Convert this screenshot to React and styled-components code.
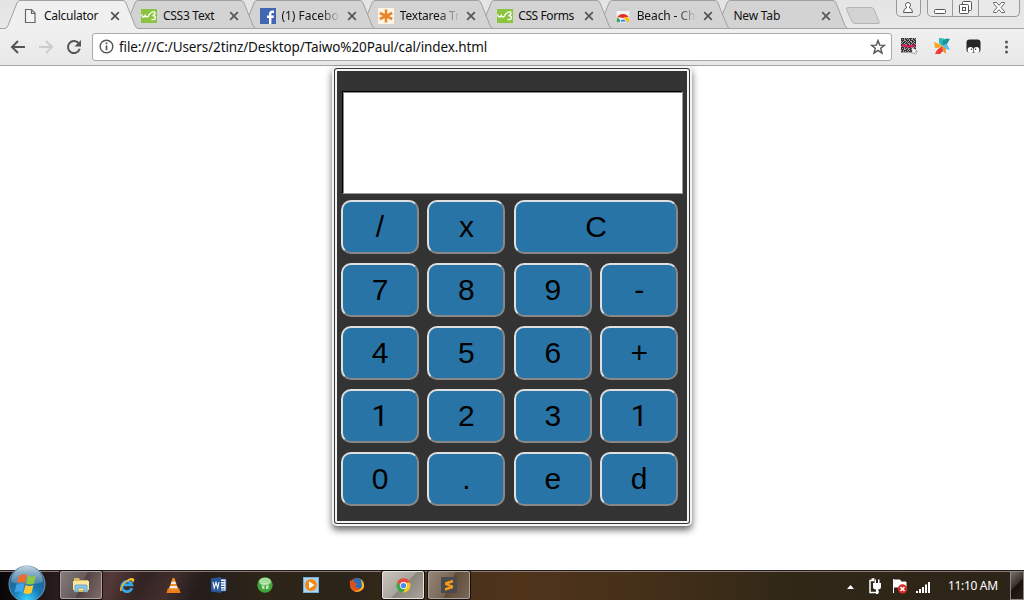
import React from 'react';
import styled, { createGlobalStyle } from 'styled-components';

const GlobalStyle = createGlobalStyle`
  * { box-sizing: border-box; }
  body { margin: 0; background: #fff; overflow: hidden; font-family: "Noto Sans", "Open Sans", sans-serif; }
  svg { display: block; flex: none; }
`;

const Screen = styled.div`
  width: 1024px; height: 600px; display: flex; flex-direction: column; background: #fff; overflow: hidden;
`;
const TabStrip = styled.header`
  height: 29px; flex: none; display: flex; align-items: flex-start; padding-left: 5px;
  background: linear-gradient(#e4e4e4, #e9e9e9); box-shadow: inset 0 -1px #a3a3a3;
`;
const TabBox = styled.div`
  position: relative; width: 133px; height: 29px; margin-right: -14.6px; flex: none;
  display: flex; align-items: center; padding: 2px 0 0 ${p => (p.$active ? 17 : 18)}px; z-index: ${p => p.$z};
`;
const TabShape = styled.svg`position: absolute; left: 0; top: 0;`;
const Favicon = styled.span`position: relative; width: 16px; height: 16px; margin-right: ${p => (p.$active ? 6 : 5.6)}px; flex: none;`;
const Title = styled.span`
  position: relative; flex: none; width: ${p => (p.$plain ? 82.600 : 61)}px; white-space: nowrap;
  font-size: 12px; line-height: 18px; color: #111; letter-spacing: ${p => p.$ls || 0}px;
  ${p => p.$fade && 'mask-image: linear-gradient(90deg, #000 64%, transparent 98%);'}
`;
const Close = styled.svg`position: relative; margin-left: 5px;`;
const NewTab = styled.svg`margin: 7px 0 0 11px;`;
const WindowControls = styled.div`display: flex; margin-left: 15px;`;
const ControlGroup = styled.div`
  display: flex; height: 17px; border: 1px solid #999; border-top: 0; border-radius: 0 0 5px 5px;
  margin-right: 6px; background: #e9e9e9; overflow: hidden;
`;
const Control = styled.div`
  width: ${p => p.$w}px; display: flex; align-items: center; justify-content: center; padding-bottom: 1px;
  & + & { border-left: 1px solid #999; }
`;

const Toolbar = styled.div`
  height: 37px; flex: none; display: flex; align-items: center; padding: 0 0 1px 10px;
  background: linear-gradient(#f0f0f0, #e8e8e8); border-bottom: 1px solid #a3a3a3;
`;
const NavIcon = styled.svg`margin-right: 12px;`;
const Address = styled.div`
  width: 800px; height: 28px; border: 1px solid #a9a9a9; border-radius: 3px; background: #fff;
  display: flex; align-items: center; padding: 0 5px 0 6px; margin-left: -2px;
`;
const Url = styled.span`
  flex: 1; margin-left: 5px; font-size: 13.5px; line-height: 20px; letter-spacing: -0.12px; color: #111; white-space: nowrap;
`;
const Extensions = styled.div`display: flex; align-items: center; margin-left: 9px; gap: 15.500px;`;

const Page = styled.main`height: 504px; flex: none; display: flex; justify-content: center; align-items: flex-start;`;
const Calculator = styled.section`
  width: 360px; height: 460px; border: 5px double #f4f4f4; border-radius: 5px; background: #333;
  box-shadow: 0 4px 7px rgba(0, 0, 0, 0.6); padding: 20px 4px 0;
`;
const Display = styled.div`
  width: 341px; height: 103px; margin-left: 1px; background: #fff;
  border: 1px solid #000; border-right-color: #9a9a9a; border-bottom-color: #9a9a9a;
  box-shadow: inset 1px 1px #8a8a8a;
`;
const Keys = styled.div`
  display: grid; grid-template-columns: repeat(4, 78px); grid-auto-rows: 54px; gap: 9px 8.4px; margin-top: 6px;
`;
const Key = styled.button`
  grid-column: span ${p => p.$span}; padding: 0; border: 2px solid; border-color: #e0e0e0 #888 #888 #e0e0e0;
  border-radius: 10px; background: #2874a6; color: #000;
  font: 30px/34px ${p => (p.$bareOne ? 'Roboto, ' : '')}"Liberation Sans", Arial, sans-serif;
`;

const Taskbar = styled.footer`
  height: 30px; flex: none; display: flex; align-items: stretch; position: relative;
  border-top: 1px solid #241d19; box-shadow: inset 0 1px #867b74;
  background:
    linear-gradient(115deg, transparent 8%, rgba(110, 72, 68, .5) 11%, transparent 14%, rgba(100, 70, 65, .4) 17%, transparent 20%),
    linear-gradient(90deg, #080607 0, #2b1d1d 60px, #3b2929 110px, #241b1c 190px, #2d2518 260px, #2b2418 350px, #49301a 440px, #4f341a 520px, #453019 640px, #302717 800px, #2c2418 1024px);
`;
const StartButton = styled.svg`position: absolute; left: 8px; top: -6px; z-index: 2;`;
const TaskList = styled.nav`display: flex; margin-left: 60px; gap: 4px;`;
const Task = styled.div`
  width: 42px; height: 28px; display: flex; align-items: center; justify-content: center; border-radius: 2px;
  ${p => p.$state === 'open' && `
    border: 1px solid #aaa39e; box-shadow: 0 0 0 1px #15100e;
    background: linear-gradient(115deg, rgba(255,255,255,.42), rgba(255,255,255,.25) 50%, rgba(255,255,255,.13) 52%, rgba(255,255,255,.26));`}
  ${p => p.$state === 'active' && `
    border: 1px solid #e5e2dd; box-shadow: 0 0 0 1px #15100e;
    background: linear-gradient(135deg, #c9c5bf, #aaa59d 50%, #8b857c 53%, #aaa49b);`}
`;
const Tray = styled.div`margin-left: auto; display: flex; align-items: center; color: #fff;`;
const Clock = styled.span`font-size: 12px; line-height: 16px; letter-spacing: -0.32px; margin: 0 0 0 15px; width: 51px; white-space: nowrap;`;
const ShowDesktop = styled.div`
  width: 14px; height: 29px; margin-left: 11px; border: 1px solid #8b857f;
  background: linear-gradient(135deg, #777069, #3b332b 45%, #17120c 50%, #282119);
`;

const W3 = () => (
  <svg width="16" height="16" viewBox="0 0 16 16">
    <rect width="16" height="14" y="1" fill="#8bc53f" />
    <path d="M.8 6.500q.2 2.500 1.800 2.500t1.700-2.500q.2 2.500 1.800 2.500t2-2.500L10 5M10 4.500q4-1.500 4 .7 0 1.800-2.500 2.300 3.200.1 2.800 2.500-.6 2.300-3.800 1.300" fill="none" stroke="#fff" strokeWidth="1.300" />
  </svg>
);
const favicons = {
  file: () => (
    <svg width="16" height="16"><path d="M3.500 1.500h6l3.500 3.500v9.500h-9.500zM9.500 1.500v4h3.500" fill="#f5f5f5" stroke="#666" strokeWidth="1.2" /></svg>
  ),
  w3: W3,
  facebook: () => (
    <svg width="16" height="16"><rect width="16" height="16" fill="#4267b2" /><path d="M9 16v-6H7V7.500h2V6q0-3.500 3.200-3.500H14V5h-1.500Q11.400 5 11.400 6v1.500H14L13.600 10h-2.200v6z" fill="#fff" /></svg>
  ),
  star: () => (
    <svg width="16" height="16"><rect width="16" height="16" fill="#fdf3e6" /><path d="M8 1.500v13M1.800 5l12.400 6M14.200 5L1.800 11" stroke="#e8862a" strokeWidth="2.500" /></svg>
  ),
  store: () => (
    <svg width="16" height="16">
      <path d="M5 4V1.500h6V4" fill="none" stroke="#ccc" strokeWidth="1.300" />
      <path d="M1.500 3h13l-.5 11H2z" fill="#f3f3f3" />
      <path d="M2.500 9a6 5 0 0 1 11 0L8 10z" fill="#e12f2b" />
      <path d="M1.800 14q-.4-3 .9-5l3.800 5z" fill="#35a853" />
      <path d="M14.200 14q.4-3-.9-5H9l-.5 5z" fill="#fbc116" />
      <path d="M5 14a3 3 0 0 1 6 0z" fill="#4285f4" stroke="#fff" strokeWidth=".7" />
    </svg>
  ),
};

const tabs = [
  { title: 'Calculator', icon: 'file', active: true, ls: -0.28 },
  { title: 'CSS3 Text', icon: 'w3', ls: -0.28 },
  { title: '(1) Facebo', icon: 'facebook', fade: true, ls: 0 },
  { title: 'Textarea Tr', icon: 'star', fade: true, ls: -0.2 },
  { title: 'CSS Forms', icon: 'w3', ls: -0.4 },
  { title: 'Beach - Ch', icon: 'store', fade: true, ls: -0.1 },
  { title: 'New Tab', ls: -0.2 },
];

const Tab = ({ title, icon, active, fade, ls, z }) => {
  const Icon = icon && favicons[icon];
  return (
    <TabBox $z={z} $active={active}>
      <TabShape width="133" height="29">
        <path d="M0 28.500Q2 28 3 25.500L12 3Q13 .5 15 .5H118Q120 .5 121 3L130 25.500Q131 28 133 28.500V29H0z" fill={active ? '#f0f0f0' : '#d3d3d3'} />
        <path d="M0 28.500Q2 28 3 25.500L12 3Q13 .5 15 .5H118Q120 .5 121 3L130 25.500Q131 28 133 28.500" fill="none" stroke="#a0a0a0" />
        {!active && <path d="M0 28.500H133" stroke="#a3a3a3" />}
      </TabShape>
      {Icon && <Favicon $active={active}><Icon /></Favicon>}
      <Title $plain={!icon} $fade={fade} $ls={ls}>{title}</Title>
      <Close width="10" height="10"><path d="M1.200 1.200l7.600 7.600M8.800 1.200L1.200 8.800" stroke="#555" strokeWidth="1.700" /></Close>
    </TabBox>
  );
};

const keys = ['/', 'x', 'C', '7', '8', '9', '-', '4', '5', '6', '+', '1', '2', '3', '1', '0', '.', 'e', 'd'];

const QR_CELLS = ['1110101011101011', '1010110101001101', '1110011101110111', '0101101010011010', '1011010111010111', '0110111001101010', '1101001101011101', '1011101110100110', '0101011001011011', '1110110111010101', '1010101001101110', '1110011011011001', '0101110101100111', '1101011011101010'];

const QrIcon = () => (
  <svg width="17" height="17">
    <rect width="15" height="15" fill="#a5a5a5" />
    {QR_CELLS.map((row, y) => [...row].slice(0, 15).map((c, x) => c === '1' && <rect key={`${x}-${y}`} x={x} y={y} width="1" height="1" fill="#3a3033" />))}
    <path d="M1 7l6 1.500 7-1" fill="none" stroke="#e0155a" strokeWidth="2" />
    <path d="M11 9v7l2-1.500 1 2 1.500-.7-1-2 2-.2z" fill="#fff" stroke="#888" strokeWidth=".6" />
  </svg>
);
const PinwheelIcon = () => (
  <svg width="17" height="17">
    <path d="M5 0l5 .5L8 8 5 5z" fill="#27b9b2" /><path d="M9 2q3-2.500 7-1l-3 5-5 2z" fill="#19949d" />
    <path d="M8 8l5-2 3 6-4-1z" fill="#4fc3f0" /><path d="M8 8l3.500 2 .5 6-3-3z" fill="#ef8d21" />
    <path d="M8 8l1 5-3 3H1l2-4z" fill="#ef3b39" /><path d="M8 8l-4 2H1L0 4l5 2z" fill="#f6a623" />
  </svg>
);
const MaskIcon = () => (
  <svg width="15" height="15">
    <rect x=".5" y=".5" width="14" height="13" rx="3" fill="#262626" />
    <circle cx="4.500" cy="11" r="2.900" fill="#fff" /><circle cx="10.500" cy="11" r="2.900" fill="#fff" />
    <circle cx="5.500" cy="10.300" r=".8" fill="#333" /><circle cx="9.500" cy="10.300" r=".8" fill="#333" />
  </svg>
);

const taskIcons = [
  { state: 'open', art: (
    <svg width="18" height="16"><path d="M2 1h5l1 2h8v12H2z" fill="#d9b95e" /><path d="M1 4h16v9H1z" fill="#f8e7a0" /><path d="M3 15V9q0-1 1-1h10q1 0 1 1v6h-3v-4H6v4z" fill="#8dc9ec" stroke="#4d91bd" strokeWidth=".7" /></svg>) },
  { art: (
    <svg width="16" height="16" viewBox="0 0 18 18"><path d="M14.500 12.500A5.800 5.800 0 1 1 14.500 8.800H4.500" fill="none" stroke="#35a8ec" strokeWidth="3" /><path d="M2 16Q-1 13 6 6T17 2q1 2-2 5 1-4-3-3T3 12q-1 3 1 3z" fill="#f5bd2e" /></svg>) },
  { art: (
    <svg width="15" height="17" viewBox="0 0 16 18"><path d="M2 12h12l1.500 5H.5z" fill="#ed7d18" /><path d="M7 1h2l4 12q-5 3-10 0z" fill="#f28a20" /><path d="M6 5h4l.9 2.500H5.200zM4.300 9.500h7.400l.8 2.500H3.500z" fill="#eee" /></svg>) },
  { art: (
    <svg width="16" height="16"><path d="M7 2h8v12H7z" fill="#fff" stroke="#2b579a" /><path d="M9 4.500h4.500M9 7h4.500M9 9.500h4.500M9 12h4.500" stroke="#2b579a" /><path d="M0 1.500L10 0v16L0 14.500z" fill="#2b579a" /><path d="M2 5l1.200 6L5 5.500 6.800 11 8 5" stroke="#fff" strokeWidth="1.100" fill="none" /></svg>) },
  { art: (
    <svg width="16" height="16"><circle cx="8" cy="8" r="7.700" fill="#41a63c" /><ellipse cx="8" cy="4.500" rx="6" ry="3.800" fill="#a6dc9d" /><path d="M4 6h7v1.200H4zM4.500 8.500h3V12h-2zM9 8.500h3L11 12H9z" fill="#c4e6bd" /></svg>) },
  { art: (
    <svg width="16" height="16"><rect x=".5" y=".5" width="15" height="15" fill="#a9d5f0" stroke="#6fb1dc" /><circle cx="8" cy="8" r="6" fill="#f08a1b" /><path d="M6 4.500l5.500 3.500L6 11.500z" fill="#fff" /></svg>) },
  { art: (
    <svg width="16" height="16"><circle cx="8" cy="8" r="7" fill="#e2621b" /><path d="M4 3Q8-1 13 3q2 3 0 7-4 3-7-1l2-2-3-1z" fill="#246fb5" /><path d="M12 2q5 5 2 10-4 4-9 2 7 0 8-5z" fill="#f9b52e" /><path d="M1 3l4 2 3 1-1 2-2 1q2 3 6 2-4 4-8 0-3-3-2-8z" fill="#dc4f1b" /></svg>) },
  { state: 'active', art: (
    <svg width="15" height="15"><circle cx="7.500" cy="7.500" r="7" fill="#f4c727" /><path d="M1.300 4A7 7 0 0 1 14 4.700H7.500L5 9z" fill="#df4b3f" /><path d="M1.300 4A7 7 0 0 0 7 14.500L10 9H5z" fill="#37a554" /><circle cx="7.500" cy="7.500" r="3.400" fill="#fff" /><circle cx="7.500" cy="7.500" r="2.600" fill="#4688f1" /></svg>) },
  { state: 'open', art: (
    <svg width="16" height="16"><rect width="16" height="16" fill="#494b4e" /><path d="M12 2.800v2.700L7.500 7 12 8.500v2.700L4 13.700V11l4.500-1.500L4 8V5.300z" fill="#fb9a12" /></svg>) },
];

export default function App() {
  return (
    <Screen>
      <GlobalStyle />
      <TabStrip>
        {tabs.map((tab, i) => <Tab key={tab.title} {...tab} z={tabs.length - i} />)}
        <NewTab width="36" height="18"><path d="M3 .5h23q2 0 3 2l5 12q1 2-1 2H10q-2 0-3-2L1.500 2.500Q1 .5 3 .5z" fill="#d3d3d3" stroke="#b4b4b4" /></NewTab>
        <WindowControls>
          <ControlGroup>
            <Control $w={23}><svg width="12" height="13"><path d="M6 1.500a2.500 2.500 0 0 1 1.500 4.500v1q3 .7 3 4.500h-9q0-3.800 3-4.500V6A2.500 2.500 0 0 1 6 1.500z" fill="#fff" stroke="#555" /></svg></Control>
          </ControlGroup>
          <ControlGroup>
            <Control $w={24}><svg width="12" height="12"><rect x=".5" y="7.500" width="11" height="4" rx="1" fill="#fff" stroke="#555" /></svg></Control>
            <Control $w={26}><svg width="13" height="13"><rect x="3.500" y=".5" width="9" height="9" rx="1" fill="#fff" stroke="#555" /><rect x=".5" y="3.500" width="9" height="9" rx="1" fill="#fff" stroke="#555" /><rect x="3.500" y="6.500" width="3" height="3" fill="#fff" stroke="#555" /></svg></Control>
            <Control $w={41}><svg width="12" height="11"><path d="M.5.5h3L6 3.300 8.500.5h3v1L8 5.500l3.500 4v1h-3L6 7.700 3.500 10.500h-3v-1L4 5.500.5 1.500z" fill="#fff" stroke="#666" /></svg></Control>
          </ControlGroup>
        </WindowControls>
      </TabStrip>

      <Toolbar>
        <NavIcon width="16" height="16"><path d="M15 8H2.500M8 2L2 8l6 6" fill="none" stroke="#555" strokeWidth="2" /></NavIcon>
        <NavIcon width="16" height="16"><path d="M1 8h12.500M8 2l6 6-6 6" fill="none" stroke="#ccc" strokeWidth="2" /></NavIcon>
        <NavIcon width="16" height="16"><path d="M12.800 4.500A6 6 0 1 0 13.700 9.800" fill="none" stroke="#555" strokeWidth="2" /><path d="M15 1v6.500H8.500z" fill="#555" /></NavIcon>
        <Address>
          <svg width="15" height="15"><circle cx="7.500" cy="7.500" r="6.300" fill="none" stroke="#555" strokeWidth="1.400" /><path d="M7.500 6.500v4.800M7.500 3.500v1.700" stroke="#555" strokeWidth="1.700" /></svg>
          <Url>file:///C:/Users/2tinz/Desktop/Taiwo%20Paul/cal/index.html</Url>
          <svg width="16" height="16"><path d="M8 1.500l1.700 4.600 4.800.2-3.800 3 1.300 4.700L8 11.300 4 14l1.300-4.700-3.800-3 4.800-.2z" fill="none" stroke="#555" strokeWidth="1.400" /></svg>
        </Address>
        <Extensions>
          <QrIcon /><PinwheelIcon /><MaskIcon />
          <svg width="16" height="14"><circle cx="9.500" cy="2" r="1.500" fill="#555" /><circle cx="9.500" cy="7" r="1.500" fill="#555" /><circle cx="9.500" cy="12" r="1.500" fill="#555" /></svg>
        </Extensions>
      </Toolbar>

      <Page>
        <Calculator>
          <Display />
          <Keys>{keys.map((k, i) => <Key key={i} $span={k === 'C' ? 2 : 1} $bareOne={k === '1'}>{k}</Key>)}</Keys>
        </Calculator>
      </Page>

      <Taskbar>
        <StartButton width="38" height="38">
          <defs>
            <radialGradient id="orb" cx=".5" cy=".95" r=".9"><stop offset="0" stopColor="#39d5ff" /><stop offset=".45" stopColor="#1878b5" /><stop offset="1" stopColor="#28587d" /></radialGradient>
            <linearGradient id="gloss" x2="0" y2="1"><stop stopColor="#c3d8e4" /><stop offset="1" stopColor="#6d9cba" stopOpacity=".5" /></linearGradient>
          </defs>
          <circle cx="19" cy="19" r="18" fill="url(#orb)" stroke="#6f98b0" />
          <path d="M3 17a16 16 0 0 1 32 0q-16 5-32 0z" fill="url(#gloss)" />
          <path d="M11 11q4-3 8-1l-2 8q-4-2-8 0z" fill="#ee6b2b" />
          <path d="M20 10.500q4 2 8 0l-2 8q-4 2-8 0z" fill="#8dc63f" />
          <path d="M8.500 19.500q4-2 8 0l-2 8q-4-2-8 0z" fill="#3fa5e5" />
          <path d="M17.500 20q4 2 8 0l-2 8q-4 2-8 0z" fill="#fdc82f" />
        </StartButton>
        <TaskList>{taskIcons.map((t, i) => <Task key={i} $state={t.state}>{t.art}</Task>)}</TaskList>
        <Tray>
          <svg width="86" height="18">
            <path d="M0 12l3.500-4L7 12z" fill="#fff" />
            <path d="M27 3.500h-4v12h8v-2M24.500 2h3" fill="none" stroke="#fff" strokeWidth="1.500" />
            <path d="M26 6h8v4q0 2-3 2.500V17h-2v-4.500q-3-.5-3-2.500zM27.500 2.500h1.500V6h-1.500zM31 2.500h1.500V6H31z" fill="#fff" />
            <path d="M46.500 2v14M47 3h6l1 2h5v5H47z" fill="#fff" stroke="#fff" />
            <circle cx="55.500" cy="12" r="4.700" fill="#d52a25" /><path d="M53.500 10l4 4M57.500 10l-4 4" stroke="#fff" strokeWidth="1.600" />
            <path d="M69 14h2v2h-2zM72 12h2v4h-2zM75 10h2v6h-2zM78 7.500h2V16h-2zM81 5h2v11h-2z" fill="#fff" />
          </svg>
          <Clock>11:10 AM</Clock>
          <ShowDesktop />
        </Tray>
      </Taskbar>
    </Screen>
  );
}
